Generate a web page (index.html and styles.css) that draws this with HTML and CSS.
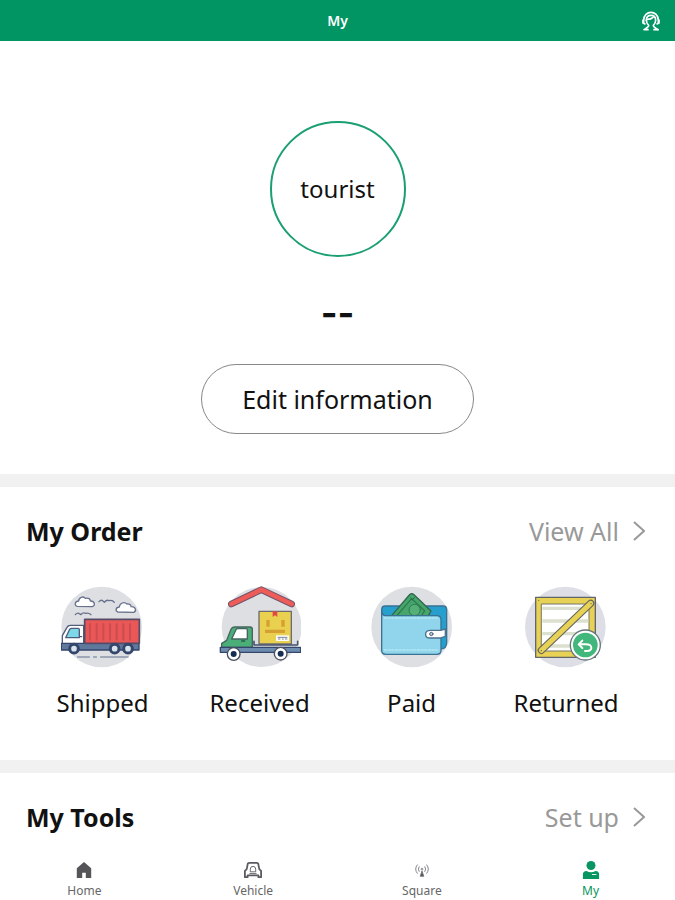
FILE: index.html
```html
<!DOCTYPE html>
<html lang="en">
<head>
    <meta charset="UTF-8">
    <meta name="viewport" content="width=device-width, initial-scale=1.0">
    <title>My</title>
    <link rel="stylesheet" href="styles.css">
</head>
<body>

    <header class="topbar">
        <h1>My</h1>
        <button class="service" aria-label="Customer service">
            <svg viewBox="0 0 60 60" fill="none" stroke="#fff" stroke-width="5" stroke-linecap="round" stroke-linejoin="round">
                <path d="M8 35V28C8 12 19 4 30 4s22 8 22 24v7"/>
                <path d="M16 28c0-11 6-15 14-15s14 4 14 15c0 7-3 11-7 15 0 5 5 8 14 13"/>
                <path d="M16 28c0 7 3 11 7 15 0 5-5 8-14 13h12M19 25c7 0 13-2 17-6M6 27v9l6 3M54 27v9l-6 3M39 56h12"/>
            </svg>
        </button>
    </header>

    <main>
        <section class="profile">
            <div class="avatar">tourist</div>
            <div class="name">--</div>
            <button class="edit">Edit information</button>
        </section>

        <section class="panel">
            <div class="panel-head">
                <h2>My Order</h2>
                <a href="#">View All
                    <svg class="arrow" viewBox="0 0 12 20"><path d="M1 1l10 9-10 9"/></svg>
                </a>
            </div>
            <div class="orders">
                <a href="#">
                    <svg viewBox="39 34 246 246" stroke-linecap="round" stroke-linejoin="round">
                        <circle cx="161" cy="157" r="121" fill="#dedfe3"/>
                        <g fill="#fff" stroke="#68718c" stroke-width="4">
                            <path d="M88 95c-9-1-9-15 4-16 0-11 14-16 20-8 10-3 15 3 15 8 12-1 17 14 6 17z"/>
                            <path d="M210 112c-9-2-7-15 4-15 1-12 15-17 23-9 9-1 13 4 12 8 14-1 18 13 8 17z"/>
                            <path d="M153 81q6-7 12-2l4 4q7-9 14-5 10-3 16 5M82 120q6-7 12-3l5 3q6-8 14-4 10-2 16 4" fill="none"/>
                        </g>
                        <path d="M43 207V183l14-25q3-6 10-6h40v55z" fill="#fff" stroke="#505c7c" stroke-width="4"/>
                        <path d="M53 189l12-25q2-3 6-3h20q3 0 3 4v24z" fill="#7dd8e7" stroke="#505c7c" stroke-width="4"/>
                        <path d="M96 186h5" stroke="#505c7c" stroke-width="4"/>
                        <path d="M40 206h233v20H40z" fill="#5e799c" stroke="#34466b" stroke-width="4"/>
                        <path d="M110 134h164v72H110z" fill="#e95756" stroke="#574b68" stroke-width="5"/>
                        <path d="M126 148v47M146 148v47M166 148v47M186 148v47M206 148v47M226 148v47M246 148v47" stroke="#cf4b52" stroke-width="6"/>
                        <g fill="#d9e3ed" stroke="#34466b" stroke-width="9">
                            <circle cx="78" cy="222" r="13"/>
                            <circle cx="200" cy="222" r="13"/>
                            <circle cx="240" cy="222" r="13"/>
                        </g>
                        <path d="M89 247h35M137 247h8M158 247h82" stroke="#8c95ac" stroke-width="5"/>
                    </svg>
                    <span>Shipped</span>
                </a>
                <a href="#">
                    <svg viewBox="39 34 246 246" stroke-linecap="round" stroke-linejoin="round">
                        <circle cx="167" cy="157" r="120" fill="#dedfe3"/>
                        <path d="M76 88l90-43 91 43" fill="none" stroke="#71556b" stroke-width="20"/>
                        <path d="M76 88l90-43 91 43" fill="none" stroke="#ee5c59" stroke-width="14"/>
                        <path d="M159 110h97v98h-97z" fill="#ead04f" stroke="#6c6b70" stroke-width="4"/>
                        <path d="M200 110h14v17l-7-5-7 5z" fill="#e04c45"/>
                        <path d="M186 136v20M231 136v20M177 170h60" stroke="#d69f32" stroke-width="10" stroke-linecap="butt"/>
                        <path d="M210 182h39v17h-39z" fill="#fff"/>
                        <path d="M216 188h27M217 193h5M229 193h3M238 193h5" stroke="#7d8394" stroke-width="3"/>
                        <path d="M144 200v11h131v-11" fill="none" stroke="#46536e" stroke-width="5"/>
                        <path d="M47 218v-12l15-9 13-33q3-7 10-7h47q7 0 7 7v54z" fill="#4bad78" stroke="#46655f" stroke-width="4"/>
                        <path d="M77 193l13-28q2-3 5-3h25q4 0 4 4v27z" fill="#fff" stroke="#46655f" stroke-width="4"/>
                        <path d="M107 199h9" stroke="#295a4c" stroke-width="4"/>
                        <path d="M43 218h241v15H43z" fill="#6d8caf" stroke="#34466b" stroke-width="4"/>
                        <g fill="#fff" stroke="#4a5061" stroke-width="4">
                            <circle cx="83" cy="238" r="19"/>
                            <circle cx="224" cy="237" r="19"/>
                        </g>
                        <g fill="#152d52">
                            <circle cx="83" cy="238" r="9"/>
                            <circle cx="224" cy="237" r="9"/>
                        </g>
                    </svg>
                    <span>Received</span>
                </a>
                <a href="#">
                    <svg viewBox="39 34 246 246" stroke-linecap="round" stroke-linejoin="round">
                        <circle cx="161" cy="157" r="121" fill="#dedfe3"/>
                        <path d="M71 105q0-11 11-11h173q11 0 11 11v98q0 20-18 20H71z" fill="#279fce" stroke="#397293" stroke-width="4"/>
                        <path d="M101 123l53-62q7-7 14-1l51 49-9 16z" fill="#46a56a" stroke="#32674f" stroke-width="4"/>
                        <path d="M118 121l43-49 39 36-8 13" fill="none" stroke="#2c7c50" stroke-width="4"/>
                        <circle cx="170" cy="106" r="17" fill="#55b077" stroke="#2c7c50" stroke-width="3"/>
                        <path d="M158 70l5 5 6-6" stroke="#24633f" stroke-width="3" fill="none"/>
                        <path d="M71 108q1 15 12 15h153q13 0 13 13v91q0 12-12 12H83q-12 0-12-12z" fill="#90d5eb" stroke="#397293" stroke-width="4"/>
                        <path d="M79 130h159M79 226h159" stroke="#c7eef8" stroke-width="3" stroke-dasharray="7 4"/>
                        <path d="M262 163l-14 4h-31c-19 0-19 23 0 23h31l14-5z" fill="#fff" stroke="#4b7290" stroke-width="4"/>
                        <circle cx="220" cy="178" r="5" fill="#b9ccd5" stroke="#4d6576" stroke-width="3"/>
                    </svg>
                    <span>Paid</span>
                </a>
                <a href="#">
                    <svg viewBox="39 34 246 246" stroke-linecap="round" stroke-linejoin="round">
                        <circle cx="160" cy="157" r="121" fill="#dedfe6"/>
                        <path d="M71 68h179v180H71z" fill="#e8d256" stroke="#62666a" stroke-width="4"/>
                        <path d="M89 88h142v141H89z" fill="#fff" stroke="#777767" stroke-width="3"/>
                        <path d="M91 101h138M91 139h138M91 177h138M91 214h138" stroke="#dce1cf" stroke-width="10" stroke-linecap="butt"/>
                        <path d="M88 227L236 86" stroke="#656760" stroke-width="22"/>
                        <path d="M88 227L236 86" stroke="#e8d256" stroke-width="15"/>
                        <g fill="#777048">
                            <circle cx="80" cy="77" r="2"/>
                            <circle cx="237" cy="87" r="2"/>
                            <circle cx="88" cy="228" r="2"/>
                        </g>
                        <circle cx="220" cy="211" r="45" fill="#fff" stroke="#657579" stroke-width="4"/>
                        <circle cx="220" cy="211" r="37" fill="#42b77c"/>
                        <path d="M211 198l-11 11 11 11M201 209h20c22 0 22 20 4 20h-6" fill="none" stroke="#fff" stroke-width="6"/>
                    </svg>
                    <span>Returned</span>
                </a>
            </div>
        </section>

        <section class="panel">
            <div class="panel-head">
                <h2>My Tools</h2>
                <a href="#">Set up
                    <svg class="arrow" viewBox="0 0 12 20"><path d="M1 1l10 9-10 9"/></svg>
                </a>
            </div>
        </section>
    </main>

    <nav class="tabbar">
        <a href="#">
            <svg viewBox="0 0 20 20"><path d="M10 1l8 7v11h-6v-6H8v6H2V8z" fill="#555459"/></svg>
            Home
        </a>
        <a href="#">
            <svg viewBox="0 0 20 20" fill="none" stroke="#5c5b62" stroke-width="2" stroke-linejoin="round">
                <path d="M1 18v-7l2-2 1-5q0-2 2-2h8q2 0 2 2l1 5 2 2v7h-3v-2H4v2z"/>
                <path d="M7 12V9q0-3 3-3t3 3v3zM6 14h8" stroke-width="1"/>
            </svg>
            Vehicle
        </a>
        <a href="#">
            <svg viewBox="0 0 20 20" fill="none" stroke="#77767a" stroke-width="1">
                <path d="M5 4q-4 5 0 10M15 4q4 5 0 10M7 6q-2 3 0 6M13 6q2 3 0 6"/>
                <circle cx="10" cy="9" r="1"/>
                <path d="M10 11l-2 6h4z" fill="#555459"/>
            </svg>
            Square
        </a>
        <a href="#" class="active">
            <svg viewBox="0 0 20 20" fill="#079561">
                <circle cx="10" cy="5" r="5"/>
                <path d="M1 20v-5q0-4 4-4 5 3 10 0 4 0 4 4v5z"/>
                <path d="M11 15h5" stroke="#fff"/>
            </svg>
            My
        </a>
    </nav>

</body>
</html>
```
FILE: styles.css
```css
* {
    box-sizing: border-box;
}

body {
    margin: 0;
    padding-bottom: 50px;
    background-color: #fff;
    color: #111;
    font-family: "Noto Sans", "Open Sans", sans-serif;
    font-size: 24px;
    line-height: 36px;
}

h1,
h2 {
    margin: 0;
}

a {
    color: inherit;
    text-decoration: none;
}

button {
    padding: 0;
    border: none;
    background: none;
    color: inherit;
    font: inherit;
    cursor: pointer;
}

svg {
    display: block;
}

/* Top bar */
.topbar {
    display: grid;
    grid-template-columns: 1fr auto 1fr;
    align-items: center;
    height: 41px;
    padding: 0 14px;
    background-color: #009563;
    color: #fff;
}

.topbar h1 {
    grid-column: 2;
    font-size: 14px;
    font-weight: 600;
    line-height: 20px;
}

.service {
    justify-self: end;
}

.service svg {
    width: 20px;
    height: 20px;
}

/* User */
.profile {
    display: flex;
    flex-direction: column;
    align-items: center;
    padding: 80px 26px 40px;
}

.avatar {
    display: flex;
    align-items: center;
    justify-content: center;
    width: 136px;
    height: 136px;
    border: 2px solid #1a9f72;
    border-radius: 50%;
}

.name {
    padding: 38px 0 33px;
    font-family: Inter, sans-serif;
    font-size: 36px;
    font-weight: 700;
    line-height: 36px;
}

.edit {
    height: 70px;
    padding: 0 40px;
    border: 1px solid #888;
    border-radius: 35px;
    font-size: 25px;
}

/* Panels */
.panel {
    padding: 0 26px;
    border-top: 13px solid #f1f1f1;
}

.panel-head {
    display: flex;
    align-items: center;
    justify-content: space-between;
    height: 88px;
}

.panel-head h2 {
    font-size: 25px;
    font-weight: 700;
}

.panel-head a {
    display: flex;
    align-items: center;
    gap: 14px;
    padding-right: 4px;
    color: #999;
    font-size: 25px;
}

.arrow {
    width: 12px;
    height: 20px;
    fill: none;
    stroke: #999;
    stroke-width: 2;
}

.orders {
    display: flex;
    justify-content: space-around;
    padding: 11px 0 39px;
}

.orders a {
    display: flex;
    flex-direction: column;
    align-items: center;
    gap: 17px;
}

.orders svg {
    width: 82px;
    height: 82px;
}

/* Bottom tabs */
.tabbar {
    position: fixed;
    right: 0;
    bottom: 0;
    left: 0;
    display: flex;
    height: 50px;
    background-color: #fff;
    color: #666;
    font-size: 12px;
    line-height: 16px;
}

.tabbar a {
    display: flex;
    flex: 1;
    flex-direction: column;
    align-items: center;
    gap: 4px;
    padding-top: 11px;
}

.tabbar svg {
    width: 18px;
    height: 18px;
}

.tabbar .active {
    color: #079561;
}
```
